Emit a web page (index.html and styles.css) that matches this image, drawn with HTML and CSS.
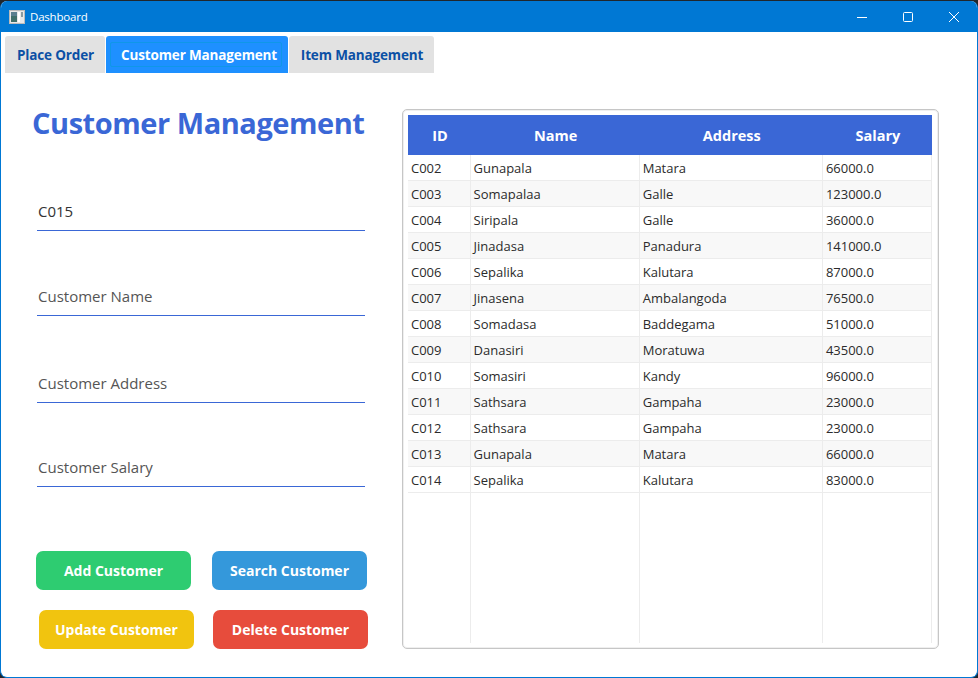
FILE: index.html
```html
<!DOCTYPE html>
<html lang="en">
<head>
    <meta charset="UTF-8">
    <meta name="viewport" content="width=device-width, initial-scale=1.0">
    <title>Dashboard</title>
    <link rel="stylesheet" href="styles.css">
</head>
<body>

<div class="window">
    <div class="titlebar">
        <svg class="app-icon" width="16" height="14" viewBox="0 0 16 14">
            <rect x="0.5" y="0.5" width="15" height="13" fill="#e8e8e8" stroke="#bbb"/>
            <rect x="2" y="2" width="6" height="10" fill="#3f6f6a"/>
            <rect x="2" y="2" width="6" height="4" fill="#5a7f8f"/>
            <rect x="9" y="2" width="2" height="10" fill="#fff"/>
            <rect x="12" y="2" width="2" height="5" fill="#8a9aa0"/>
        </svg>
        <span class="window-title">Dashboard</span>
        <div class="window-controls">
            <svg width="46" height="32" viewBox="0 0 46 32">
                <line x1="18" y1="16.5" x2="28" y2="16.5" stroke="#fff"/>
            </svg>
            <svg width="46" height="32" viewBox="0 0 46 32">
                <rect x="18.5" y="11.5" width="9" height="9" rx="1" fill="none" stroke="#fff"/>
            </svg>
            <svg width="46" height="32" viewBox="0 0 46 32">
                <path d="M18 11 L28 21 M28 11 L18 21" stroke="#fff" fill="none"/>
            </svg>
        </div>
    </div>

    <div class="tabs">
        <div class="tab">Place Order</div>
        <div class="tab active"><span class="tab-focus">Customer Management</span></div>
        <div class="tab">Item Management</div>
    </div>

    <div class="content">
        <div class="form-side">
            <h1>Customer Management</h1>

            <input class="field field-first" type="text" value="C015">
            <input class="field field-name" type="text" placeholder="Customer Name">
            <input class="field field-address" type="text" placeholder="Customer Address">
            <input class="field field-salary" type="text" placeholder="Customer Salary">

            <div class="btn-row row-one">
                <button class="btn green">Add Customer</button>
                <button class="btn blue">Search Customer</button>
            </div>
            <div class="btn-row row-two">
                <button class="btn yellow">Update Customer</button>
                <button class="btn red">Delete Customer</button>
            </div>
        </div>

        <div class="table-panel">
            <table>
                <colgroup>
                    <col class="col-id">
                    <col class="col-name">
                    <col class="col-address">
                    <col class="col-salary">
                </colgroup>
                <tr>
                    <th>ID</th>
                    <th>Name</th>
                    <th>Address</th>
                    <th>Salary</th>
                </tr>
                <tr><td>C002</td><td>Gunapala</td><td>Matara</td><td>66000.0</td></tr>
                <tr><td>C003</td><td>Somapalaa</td><td>Galle</td><td>123000.0</td></tr>
                <tr><td>C004</td><td>Siripala</td><td>Galle</td><td>36000.0</td></tr>
                <tr><td>C005</td><td>Jinadasa</td><td>Panadura</td><td>141000.0</td></tr>
                <tr><td>C006</td><td>Sepalika</td><td>Kalutara</td><td>87000.0</td></tr>
                <tr><td>C007</td><td>Jinasena</td><td>Ambalangoda</td><td>76500.0</td></tr>
                <tr><td>C008</td><td>Somadasa</td><td>Baddegama</td><td>51000.0</td></tr>
                <tr><td>C009</td><td>Danasiri</td><td>Moratuwa</td><td>43500.0</td></tr>
                <tr><td>C010</td><td>Somasiri</td><td>Kandy</td><td>96000.0</td></tr>
                <tr><td>C011</td><td>Sathsara</td><td>Gampaha</td><td>23000.0</td></tr>
                <tr><td>C012</td><td>Sathsara</td><td>Gampaha</td><td>23000.0</td></tr>
                <tr><td>C013</td><td>Gunapala</td><td>Matara</td><td>66000.0</td></tr>
                <tr><td>C014</td><td>Sepalika</td><td>Kalutara</td><td>83000.0</td></tr>
                <tr class="filler"><td></td><td></td><td></td><td></td></tr>
            </table>
        </div>
    </div>
</div>

</body>
</html>
```

FILE: styles.css
```css
* {
    box-sizing: border-box;
}

html, body {
    margin: 0;
    height: 100%;
    overflow: hidden;
}

body {
    font-family: "Open Sans", "Noto Sans", sans-serif;
    background-color: #20262c;
    padding-top: 1px;
}

.window {
    width: 978px;
    height: 677px;
    background-color: white;
    border: 1px solid #0078d4;
    border-top: none;
    border-radius: 7px;
    overflow: hidden;
}

.titlebar {
    height: 31px;
    background-color: #0078d4;
    color: white;
    display: flex;
    align-items: center;
    padding-left: 8px;
    font-size: 11.5px;
    letter-spacing: -0.2px;
}

.app-icon {
    margin-right: 5px;
}

.window-controls {
    margin-left: auto;
    display: flex;
    height: 31px;
}

.window-controls svg {
    display: block;
}

.tabs {
    display: flex;
    gap: 1px;
    padding: 4px 0 0 4px;
}

.tab {
    height: 37px;
    padding-left: 1px;
    display: flex;
    align-items: center;
    justify-content: center;
    background-color: #e2e2e2;
    color: #0b50a5;
    font-size: 13.5px;
    font-weight: 700;
    letter-spacing: -0.15px;
    white-space: nowrap;
    border-radius: 3px 3px 0 0;
}

.tab:nth-child(1) {
    width: 100px;
}

.tab:nth-child(2) {
    width: 182px;
}

.tab:nth-child(3) {
    width: 145px;
}

.tab.active {
    background-color: #1e90ff;
    color: white;
    justify-content: flex-end;
    padding-right: 6px;
}

.tab-focus {
    display: flex;
    align-items: center;
    height: 25px;
    padding: 0 4px 0 10px;
    border: 1px solid #0f97e8;
    border-radius: 2px;
}

.content {
    display: flex;
    align-items: flex-start;
}

.form-side {
    width: 401px;
    flex: none;
}

h1 {
    margin: 30px 0 0 31px;
    height: 40px;
    line-height: 40px;
    font-size: 29px;
    font-weight: 700;
    letter-spacing: -0.45px;
    color: #3a67d6;
    white-space: nowrap;
}

.field {
    display: block;
    width: 328px;
    margin-left: 36px;
    height: 37px;
    padding: 0 1px 3px;
    border: none;
    border-bottom: 1px solid #3a67d6;
    outline: none;
    background: transparent;
    font-family: inherit;
    font-size: 15px;
    color: #333;
}

.field::placeholder {
    color: #555;
    opacity: 1;
}

.field-first {
    margin-top: 51px;
}

.field-name {
    margin-top: 48px;
}

.field-address {
    margin-top: 50px;
}

.field-salary {
    margin-top: 47px;
}

.btn-row {
    display: flex;
}

.row-one {
    margin: 64px 0 0 35px;
    gap: 21px;
}

.row-two {
    margin: 20px 0 0 38px;
    gap: 19px;
}

.btn {
    width: 155px;
    height: 39px;
    padding: 0;
    border: none;
    border-radius: 7px;
    color: white;
    font-family: inherit;
    font-size: 14px;
    font-weight: 700;
    cursor: pointer;
}

.green {
    background-color: #2ecc71;
}

.blue {
    background-color: #3498db;
}

.yellow {
    background-color: #f1c40f;
}

.red {
    background-color: #e74c3c;
}

.table-panel {
    width: 537px;
    height: 540px;
    margin-top: 36px;
    padding: 5px 6px 6px 5px;
    border: 1px solid #c6c6c6;
    border-radius: 5px;
    box-shadow: inset 0 0 0 1px #efefef;
}

table {
    border-collapse: collapse;
    table-layout: fixed;
    width: 524px;
}

.col-id {
    width: 62px;
}

.col-name {
    width: 169px;
}

.col-address {
    width: 183px;
}

.col-salary {
    width: 109px;
}

th {
    height: 40px;
    padding: 1px 0 0 2px;
    background-color: #3a67d6;
    color: white;
    font-size: 14.5px;
    font-weight: 700;
}

td {
    height: 26px;
    padding: 1px 3px 0;
    border: 1px solid #ececec;
    font-size: 13px;
    color: #2b2b2b;
}

td:first-child {
    border-left: none;
}

tr:nth-child(2) td {
    height: 25px;
    border-top: none;
}

tr:nth-child(odd) td {
    background-color: #f8f8f8;
}

.filler td {
    height: 151px;
    border-bottom: none;
}

tr.filler td {
    background-color: white;
}
```
